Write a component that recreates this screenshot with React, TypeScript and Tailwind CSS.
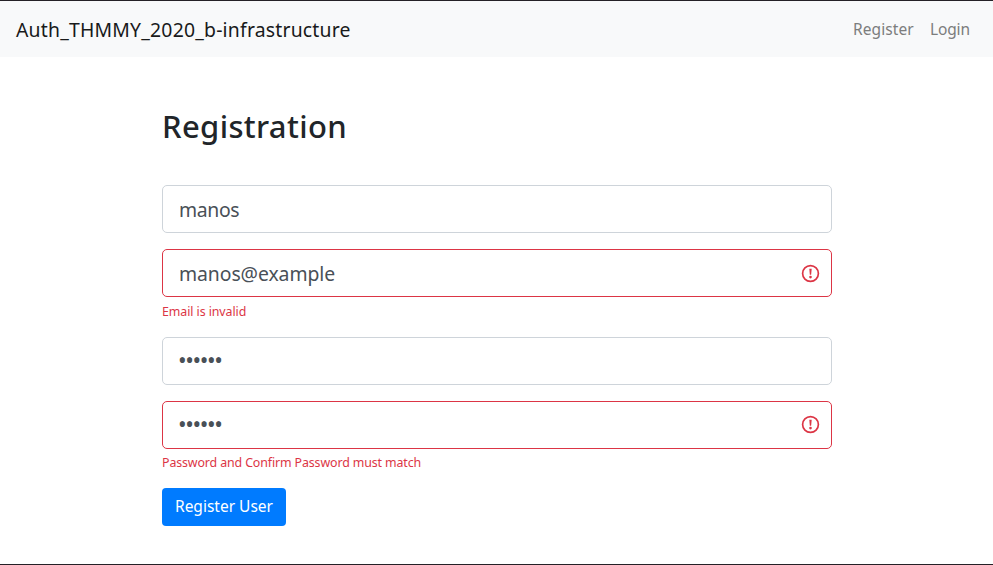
import React from "react";

function ErrorIcon({ className }: { className: string }) {
  return (
    <svg className={`pointer-events-none absolute right-3 h-[19px] w-[19px] ${className}`} viewBox="0 0 19 19" fill="none" stroke="#dc3545">
      <circle cx="9.5" cy="9.5" r="7.9" strokeWidth="1.7" />
      <path d="M8.3 4.7h2.4l-.55 6.1h-1.3z" fill="#dc3545" stroke="none" />
      <circle cx="9.5" cy="13.1" r="1.3" fill="#dc3545" stroke="none" />
    </svg>
  );
}

type FieldProps = {
  value: string;
  type?: string;
  error?: string;
  textClass: string;
  errorClass?: string;
  iconClass?: string;
};

function Field({ value, type = "text", error, textClass, errorClass = "", iconClass = "top-[15px]" }: FieldProps) {
  return (
    <div>
      <div className="relative">
        <input
          type={type}
          defaultValue={value}
          className={`block h-12 w-full rounded-[5px] border bg-white pr-4 text-[#495057] outline-none ${error ? "border-[#dc3545]" : "border-[#ced4da]"} ${textClass}`}
        />
        {error && <ErrorIcon className={iconClass} />}
      </div>
      {error && (
        <div className={`h-[19px] whitespace-nowrap text-[12.4px] leading-[20px] text-[#dc3545] ${errorClass}`}>{error}</div>
      )}
    </div>
  );
}

export default function App() {
  return (
    <div className="flex h-[565px] w-full flex-col overflow-hidden border-y border-[#242126] bg-white font-['Noto_Sans',sans-serif]">
      <nav className="flex h-14 shrink-0 items-center justify-between bg-[#f8f9fa] pl-4 pr-[23px]">
        <span className="whitespace-nowrap pt-0.5 text-[19.4px] leading-[30px] tracking-[0.2px] text-[#191a1b]">Auth_THMMY_2020_b-infrastructure</span>
        <div className="flex gap-4 text-[15.5px] leading-6 text-[#7c7d7d]">
          <span className="tracking-[0.1px]">Register</span>
          <span className="tracking-[-0.1px]">Login</span>
        </div>
      </nav>
      <main className="ml-[162px] w-[670px] pt-[50px]">
        <h1 className="h-[38px] whitespace-nowrap text-[31px] font-medium leading-[38px] tracking-[0.35px] text-[#212529]">Registration</h1>
        <form className="mt-[40px] flex flex-col gap-4">
          <Field value="manos" textClass="pl-4 text-[19.4px] tracking-[-0.35px]" />
          <Field value="manos@example" error="Email is invalid" textClass="pl-4 text-[19.4px] tracking-[-0.08px]" errorClass="mt-[5px] tracking-[-0.08px]" />
          <Field value="secret" type="password" textClass="pb-[3px] pl-[15px] text-[23px] tracking-[-1.4px]" />
          <Field value="secret" type="password" error="Password and Confirm Password must match" textClass="pb-[3px] pl-[15px] text-[23px] tracking-[-1.4px]" errorClass="mt-1 tracking-[-0.12px]" iconClass="top-[14px]" />
          <button type="button" className="h-[38px] w-[124px] whitespace-nowrap rounded-[4px] bg-[#007bff] pb-0.5 text-[15.5px] leading-6 text-white">
            Register User
          </button>
        </form>
      </main>
    </div>
  );
}
